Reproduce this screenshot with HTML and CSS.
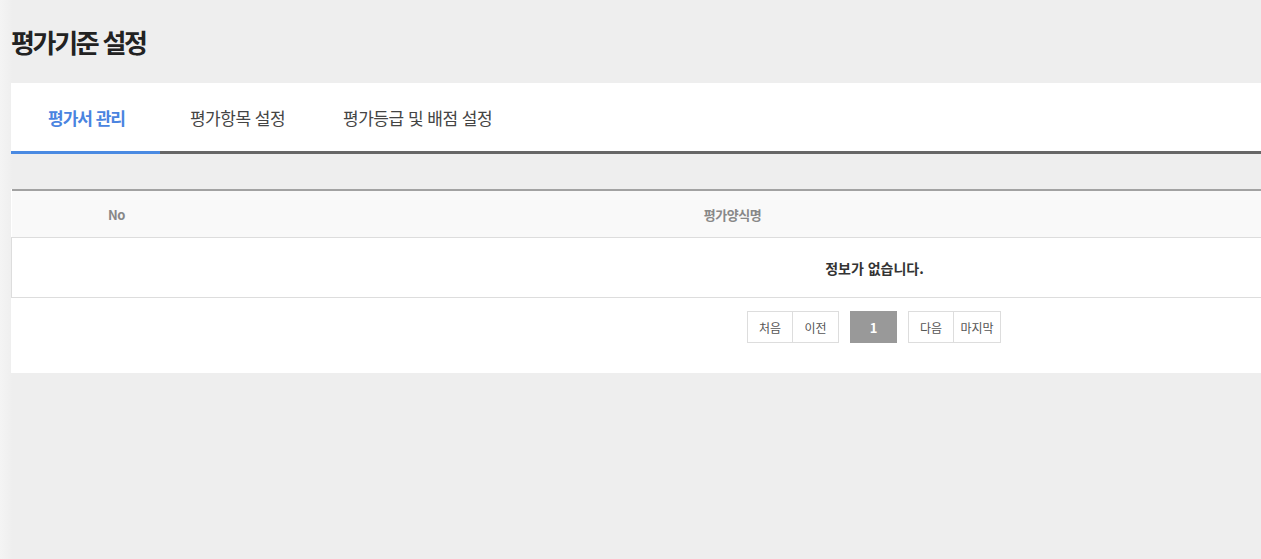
FILE: index.html
```html
<!DOCTYPE html>
<html lang="ko">
<head>
<meta charset="utf-8">
<title>평가기준 설정</title>
<link rel="stylesheet" href="styles.css">
</head>
<body>
<div class="page">
  <h1 class="page-title">평가기준 설정</h1>
  <nav class="tabs">
    <a class="tab active">평가서 관리</a>
    <a class="tab">평가항목 설정</a>
    <a class="tab">평가등급 및 배점 설정</a>
  </nav>
  <section class="board">
    <table class="list">
      <colgroup>
        <col class="c-no">
        <col class="c-name">
        <col class="c-etc">
      </colgroup>
      <thead>
        <tr><th>No</th><th>평가양식명</th><th></th></tr>
      </thead>
      <tbody>
        <tr><td class="empty" colspan="3">정보가 없습니다.</td></tr>
      </tbody>
    </table>
    <div class="paging">
      <div class="pg-group">
        <a class="pg">처음</a><a class="pg">이전</a>
      </div>
      <a class="pg current">1</a>
      <div class="pg-group">
        <a class="pg">다음</a><a class="pg wide">마지막</a>
      </div>
    </div>
  </section>
</div>
</body>
</html>
```
FILE: styles.css
```css
html { overflow: hidden; }
body {
  margin: 0;
  background: linear-gradient(to right, #f4f4f4 0, #efefef 11px, #eeeeee 12px) #eee;
  font-family: "Noto Sans CJK KR", "Noto Sans", sans-serif;
  color: #333;
  min-height: 559px;
}
.page {
  padding: 27px 0 0 11px;
  width: 1726px;
}
.page-title {
  margin: 0;
  font-size: 26px;
  line-height: 30px;
  height: 56px;
  font-weight: 700;
  letter-spacing: -2.3px;
  color: #222;
}
.tabs {
  display: flex;
  background: #fff;
  height: 68px;
  border-bottom: 3px solid #666;
}
.tab {
  display: flex;
  align-items: center;
  padding: 0 28px 0 30px;
  font-size: 17px;
  letter-spacing: -0.5px;
  color: #444;
  height: 68px;
  box-sizing: border-box;
}
.tab.active {
  padding: 0 35px 0 37px;
  color: #4a84e0;
  font-weight: 700;
  letter-spacing: -1px;
  height: 71px;
  border-bottom: 3px solid #4a8ae2;
}
.board {
  margin-top: 35px;
  background: #fff;
  padding-bottom: 30px;
}
.list {
  width: 100%;
  border-collapse: collapse;
  table-layout: fixed;
  border-top: 2px solid #a2a2a2;
}
.c-no { width: 210px; }
.c-name { width: 1022px; }
.list th {
  height: 46px;
  background: #f9f9f9;
  border-bottom: 1px solid #ddd;
  font-size: 13px;
  font-weight: 700;
  color: #888;
  letter-spacing: -0.5px;
  padding: 0;
}
.list td.empty {
  height: 59px;
  border-bottom: 1px solid #ddd;
  border-left: 1px solid #ddd;
  text-align: center;
  font-size: 14px;
  font-weight: 700;
  color: #333;
  padding: 0;
}
.paging {
  display: flex;
  justify-content: center;
  gap: 11px;
  padding-top: 13px;
}
.pg-group { display: flex; }
.pg {
  display: flex;
  align-items: center;
  justify-content: center;
  width: 46px;
  height: 32px;
  box-sizing: border-box;
  border: 1px solid #ddd;
  font-size: 12px;
  color: #555;
}
.pg.wide { width: 47px; }
.pg-group .pg + .pg { border-left: 0; }
.pg.current {
  width: 47px;
  background: #999;
  border-color: #999;
  color: #fff;
  font-weight: 700;
  font-size: 13px;
}
```
